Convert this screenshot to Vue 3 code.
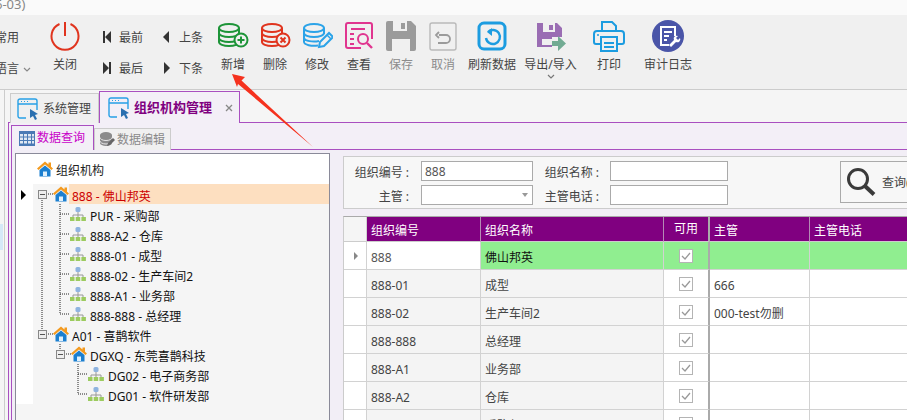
<script setup>
// tree rows: guide = dotted connector path, box = expander box position
const treeRows = [
  { text: '888 - 佛山邦英', kind: 'home', width: 20, guide: 'M13 10H20M9 14V20', box: 5, selected: true },
  { text: 'PUR - 采购部', kind: 'node', width: 37, guide: 'M9 0V20M27 0V20M27 10H37' },
  { text: '888-A2 - 仓库', kind: 'node', width: 37, guide: 'M9 0V20M27 0V20M27 10H37' },
  { text: '888-01 - 成型', kind: 'node', width: 37, guide: 'M9 0V20M27 0V20M27 10H37' },
  { text: '888-02 - 生产车间2', kind: 'node', width: 37, guide: 'M9 0V20M27 0V20M27 10H37' },
  { text: '888-A1 - 业务部', kind: 'node', width: 37, guide: 'M9 0V20M27 0V20M27 10H37' },
  { text: '888-888 - 总经理', kind: 'node', width: 37, guide: 'M9 0V20M27 0V10M27 10H37' },
  { text: 'A01 - 喜鹊软件', kind: 'home', width: 20, guide: 'M9 0V6M13 10H20', box: 5 },
  { text: 'DGXQ - 东莞喜鹊科技', kind: 'home', width: 38, guide: 'M27 0V6M31 10H38', box: 23 },
  { text: 'DG02 - 电子商务部', kind: 'node', width: 55, guide: 'M45 0V20M45 10H55' },
  { text: 'DG01 - 软件研发部', kind: 'node', width: 55, guide: 'M45 0V10M45 10H55' }
]

const gridRows = [
  { code: '888', name: '佛山邦英', manager: '', current: true },
  { code: '888-01', name: '成型', manager: '666' },
  { code: '888-02', name: '生产车间2', manager: '000-test勿删' },
  { code: '888-888', name: '总经理', manager: '' },
  { code: '888-A1', name: '业务部', manager: '' },
  { code: '888-A2', name: '仓库', manager: '' },
  { code: 'PUR', name: '采购部', manager: '' }
]
</script>

<template>
  <div class="app">
    <div class="title-bar"><span>6-03)</span></div>

    <div class="ribbon">
      <div class="quick">
        <span>常用</span>
        <span>语言 <svg class="chev" width="8" height="5" viewBox="0 0 8 5"><path d="M1 1l3 3 3-3" fill="none" stroke="#888" stroke-width="1.2" /></svg></span>
      </div>

      <button class="btn">
        <svg width="32" height="32" viewBox="0 0 32 32" fill="none" stroke="#e0341e" stroke-width="2"><path d="M10.500 4a13.500 13.500 0 1 0 11 0" /><path d="M16 2v14" /></svg>
        <span>关闭</span>
      </button>

      <div class="nav">
        <span class="nav-item"><svg width="10" height="12" viewBox="0 0 10 12"><path d="M1 0h2v12H1zM9 0v12L3 6z" fill="#333" /></svg>最前</span>
        <span class="nav-item"><svg width="10" height="12" viewBox="0 0 10 12"><path d="M7 0v12L1 6z" fill="#333" /></svg>上条</span>
        <span class="nav-item"><svg width="10" height="12" viewBox="0 0 10 12"><path d="M9 0h-2v12h2zM1 0v12l6-6z" fill="#333" /></svg>最后</span>
        <span class="nav-item"><svg width="10" height="12" viewBox="0 0 10 12"><path d="M2 0v12l6-6z" fill="#333" /></svg>下条</span>
      </div>

      <button class="btn">
        <svg width="32" height="32" viewBox="0 0 32 32" fill="none" stroke="#1d9438" stroke-width="2"><path d="M2 8a10 4 0 0 1 20 0a10 4 0 0 1-20 0V22a10 4 0 0 0 20 0V8M2 13a10 4 0 0 0 20 0M2 18a10 4 0 0 0 20 0" /><circle cx="24" cy="20" r="6.5" fill="#f0f0f0" /><path d="M20.5 20h7M24 16.5v7" /></svg>
        <span>新增</span>
      </button>
      <button class="btn">
        <svg width="32" height="32" viewBox="0 0 32 32" fill="none" stroke="#e0341e" stroke-width="2"><path d="M3 8a10 4 0 0 1 20 0a10 4 0 0 1-20 0V22a10 4 0 0 0 20 0V8M3 13a10 4 0 0 0 20 0M3 18a10 4 0 0 0 20 0" /><circle cx="24" cy="20" r="6.5" fill="#f0f0f0" /><path d="M21.5 17.5l5 5M26.5 17.5l-5 5" /></svg>
        <span>删除</span>
      </button>
      <button class="btn">
        <svg width="32" height="32" viewBox="0 0 32 32" fill="none" stroke="#2ba3e8" stroke-width="2"><path d="M3 8a10 4 0 0 1 20 0a10 4 0 0 1-20 0V22a10 4 0 0 0 14 3.5M3 13a10 4 0 0 0 20 0M3 18a10 4 0 0 0 15 3M23 8V14" /><path d="M18 27l1-5 9-9 4 4-9 9z" fill="#f0f0f0" /><path d="M26 15l4 4" stroke-width="1.5" /></svg>
        <span>修改</span>
      </button>
      <button class="btn">
        <svg width="32" height="32" viewBox="0 0 32 32" fill="none" stroke="#e0358f" stroke-width="2"><path d="M18 28H5a2 2 0 0 1-2-2V5a2 2 0 0 1 2-2h22a2 2 0 0 1 2 2v14" /><path d="M8 9h14M7 14h4M7 19h4M7 24h4" /><circle cx="20" cy="19" r="5" /><path d="M24 23l5 5" stroke-width="2.4" /></svg>
        <span>查看</span>
      </button>
      <button class="btn off">
        <svg width="32" height="32" viewBox="0 0 32 32"><path d="M1 3a2 2 0 0 1 2-2h23l5 5v23a2 2 0 0 1-2 2H3a2 2 0 0 1-2-2z" fill="#9b9b9b" /><path d="M8 1h14v10H8z" fill="#f0f0f0" /><path d="M16 3h4v6h-4z" fill="#9b9b9b" /><path d="M7 19h18v12H7z" fill="#f0f0f0" /></svg>
        <span>保存</span>
      </button>
      <button class="btn off">
        <svg width="32" height="32" viewBox="0 0 32 32" fill="none"><rect x="3" y="3" width="26" height="27" rx="2" stroke="#b9b9b9" stroke-width="1.4" /><path d="M12 15h7a4 4 0 0 1 0 8h-8M12 12l-3 3 3 3" stroke="#9b9b9b" stroke-width="1.8" /></svg>
        <span>取消</span>
      </button>
      <button class="btn wide">
        <svg width="32" height="32" viewBox="0 0 32 32" fill="none" stroke="#1c9ce0"><rect x="3" y="3" width="26" height="26" rx="5" stroke-width="3" /><path d="M12 12a7 7 0 1 1-2 6" stroke-width="2.4" /><path d="M16 8l-5 4 5 4z" fill="#1c9ce0" stroke="none" /></svg>
        <span>刷新数据</span>
      </button>
      <button class="btn export">
        <svg width="32" height="32" viewBox="0 0 32 32"><path d="M2 3h20l5 5v9H17v10H2z" fill="#9a6db3" /><path d="M8 3h12v9H8z" fill="#f0f0f0" /><path d="M14 5h4v5h-4z" fill="#9a6db3" /><path d="M7 19h10v6H7z" fill="#f0f0f0" /><path d="M17 21h6v-5l8 7.500-8 7.500v-5h-6z" fill="#72ab93" /></svg>
        <span>导出/导入</span>
        <svg class="chev-down" width="8" height="5" viewBox="0 0 8 5"><path d="M1 1l3 3 3-3" fill="none" stroke="#777" stroke-width="1.2" /></svg>
      </button>
      <button class="btn wide">
        <svg width="32" height="32" viewBox="0 0 32 32" fill="none" stroke="#1c9ce0" stroke-width="2"><path d="M9 12V2h10l4 4v6" /><path d="M8 24H3a2 2 0 0 1-2-2v-8a3 3 0 0 1 3-3h24a3 3 0 0 1 3 3v8a2 2 0 0 1-2 2h-5" /><path d="M8 17h16v14H8z" /><path d="M11 23h10M11 27h10" /><circle cx="5" cy="15" r="1" fill="#1c9ce0" stroke="none" /></svg>
        <span>打印</span>
      </button>
      <button class="btn audit">
        <svg width="32" height="32" viewBox="0 0 32 32" fill="none"><circle cx="16" cy="16" r="16" fill="#4a55a8" /><path d="M17 25H9V7h14v9M12 12h8M12 16h5M12 20h3" stroke="#fff" stroke-width="2" /><path d="M17 25l5-5a3 3 0 0 1 4-4l-2 2 2 2 2-2a3 3 0 0 1-4 4l-5 5z" fill="#fff" /></svg>
        <span>审计日志</span>
      </button>
    </div>

    <div class="body">
      <div class="side"><div class="side-mark"></div></div>

      <div class="main">
        <div class="tabs">
          <div class="tab">
            <svg width="22" height="22" viewBox="0 0 22 22" fill="none"><path d="M9 20H3a2 2 0 0 1-2-2V3a2 2 0 0 1 2-2h15a2 2 0 0 1 2 2v9M1 6h19" stroke="#27a0e6" stroke-width="1.4" /><path d="M4 3.500h1M7 3.500h1M10 3.500h1" stroke="#27a0e6" /><path d="M13 11l8 5-3 1 2 4-2 1-2-4-3 2z" fill="#2a6fb0" /></svg>
            <span>系统管理</span>
          </div>
          <div class="tab active">
            <svg width="22" height="22" viewBox="0 0 22 22" fill="none"><path d="M9 20H3a2 2 0 0 1-2-2V3a2 2 0 0 1 2-2h15a2 2 0 0 1 2 2v9M1 6h19" stroke="#27a0e6" stroke-width="1.4" /><path d="M4 3.500h1M7 3.500h1M10 3.500h1" stroke="#27a0e6" /><path d="M13 11l8 5-3 1 2 4-2 1-2-4-3 2z" fill="#2a6fb0" /></svg>
            <b>组织机构管理</b>
            <svg class="tab-close" width="8" height="8" viewBox="0 0 8 8"><path d="M1 1l6 6M7 1l-6 6" stroke="#888" stroke-width="1.300" /></svg>
          </div>
        </div>

        <div class="panel">
          <div class="sub-tabs">
            <div class="sub-tab active">
              <svg width="16" height="15" viewBox="0 0 16 15"><path d="M0 0h16v15H0z" fill="#4a7ab5" /><path d="M1 3h3v2.500H1zM5 3h3v2.500H5zM9 3h3v2.500H9zM13 3h2v2.500h-2zM1 6.500h3V9H1zM5 6.500h3V9H5zM9 6.500h3V9H9zM13 6.500h2V9h-2zM1 10h3v2.500H1zM5 10h3v2.500H5zM9 10h3v2.500H9zM13 10h2v2.500h-2z" fill="#dfe8f3" /></svg>
              <span>数据查询</span>
            </div>
            <div class="sub-tab">
              <svg width="15" height="15" viewBox="0 0 15 15"><path d="M0 3a6 3 0 0 1 12 0v8a6 3 0 0 1-12 0z" fill="#8b8b8b" /><path d="M0 5.500a6 3 0 0 0 12 0M0 9a6 3 0 0 0 12 0" fill="none" stroke="#e6e6e6" /><path d="M7 14l1-3 5-5 2 2-5 5z" fill="#666" /></svg>
              <span>数据编辑</span>
            </div>
          </div>

          <div class="sub-panel">
            <div class="tree">
              <div class="tree-title">
                <svg class="icon" width="16" height="16" viewBox="0 0 16 16"><path d="M8 .5L0 7.500l1.500 1.500L8 3.500l6.500 5.500L16 7.500l-2-1.800V1.500h-2.500v2z" fill="#f39a1f" /><path d="M2.500 9L8 4.500 13.500 9v6.500h-11z" fill="#1b7fd0" /><path d="M6 10.500h4V15H6z" fill="#dff0fb" /></svg>
                <span>组织机构</span>
              </div>
              <div class="tree-body">
                <div class="gutter">
                  <svg class="marker" width="6" height="10" viewBox="0 0 6 10"><path d="M0 0l5 5-5 5z" fill="#000" /></svg>
                </div>
                <div class="tree-list">
                  <div v-for="row in treeRows" :key="row.text" class="tree-row">
                    <svg class="guide" :width="row.width" height="20">
                      <path :d="row.guide" fill="none" stroke="#222" stroke-dasharray="1 1" />
                      <g v-if="row.box !== undefined">
                        <rect :x="row.box + 0.5" y="6.500" width="8" height="8" fill="#eee" stroke="#888" />
                        <path :d="`M${row.box + 2} 10.500h5`" stroke="#555" />
                      </g>
                    </svg>
                    <svg v-if="row.kind === 'home'" class="icon" width="16" height="16" viewBox="0 0 16 16"><path d="M8 .5L0 7.500l1.500 1.500L8 3.500l6.500 5.500L16 7.500l-2-1.800V1.500h-2.500v2z" fill="#f39a1f" /><path d="M2.500 9L8 4.500 13.500 9v6.500h-11z" fill="#1b7fd0" /><path d="M6 10.500h4V15H6z" fill="#dff0fb" /></svg>
                    <svg v-else class="icon" width="16" height="16" viewBox="0 0 16 16"><rect x="5.500" y="1" width="5" height="5" rx="1.500" fill="#8fb4e0" /><path d="M3 12V9h10v3M8 6v6" fill="none" stroke="#999" /><path d="M0 11h4.500v4H0zM5.700 11h4.500v4H5.700zM11.400 11h4.500v4h-4.500z" fill="#9ccb5f" /></svg>
                    <span class="tree-text" :class="{ selected: row.selected, home: row.kind === 'home' }">{{ row.text }}</span>
                  </div>
                </div>
              </div>
            </div>

            <div class="right">
              <div class="search">
                <div class="form">
                  <label>组织编号 :</label>
                  <input class="field" value="888" readonly />
                  <label>组织名称 :</label>
                  <input class="field" readonly />
                  <label>主管 :</label>
                  <div class="field combo"><i></i></div>
                  <label>主管电话 :</label>
                  <input class="field" readonly />
                </div>
                <button class="query">
                  <svg width="30" height="30" viewBox="0 0 30 30" fill="none" stroke="#3a3a3a"><circle cx="12" cy="12" r="9.500" stroke-width="3" /><path d="M19 19l9 8.500" stroke-width="4" /></svg>
                  <span>查询(F)</span>
                </button>
              </div>

              <div class="grid">
                <div class="grid-row head">
                  <div class="cell ind"></div>
                  <div class="cell">组织编号</div>
                  <div class="cell">组织名称</div>
                  <div class="cell center thick">可用</div>
                  <div class="cell">主管</div>
                  <div class="cell">主管电话</div>
                </div>
                <div v-for="row in gridRows" :key="row.code" class="grid-row" :class="{ current: row.current }">
                  <div class="cell ind">
                    <svg v-if="row.current" width="5" height="8" viewBox="0 0 5 8"><path d="M0 0l4 4-4 4z" fill="#888" /></svg>
                  </div>
                  <div class="cell code">{{ row.code }}</div>
                  <div class="cell name">{{ row.name }}</div>
                  <div class="cell center thick flag">
                    <span class="check">
                      <svg width="10" height="8" viewBox="0 0 10 8"><path d="M1 4l3 3 5-6" fill="none" stroke="#999" stroke-width="1.300" /></svg>
                    </span>
                  </div>
                  <div class="cell">{{ row.manager }}</div>
                  <div class="cell"></div>
                </div>
              </div>
            </div>
          </div>
        </div>
      </div>
    </div>

    <svg class="pointer" width="907" height="420"><path d="M232 74L245 77L241.500 80.500L313 147L238 84L237 87Z" fill="#f5321e" /></svg>
  </div>
</template>

<style scoped>
.app {
  position: relative;
  display: flex;
  flex-direction: column;
  width: 907px;
  height: 420px;
  overflow: hidden;
  background: #fafafa;
  color: #444;
  font-family: "Noto Sans", "Noto Sans CJK SC", sans-serif;
  font-size: 12px;
}

.title-bar {
  flex: 0 0 15px;
  line-height: 9px;
  font-size: 13px;
  color: #888;
  overflow: hidden;
}
.title-bar span {
  margin-left: -5px;
}

/* 工具栏 */
.ribbon {
  display: flex;
  flex: 0 0 75px;
  box-sizing: border-box;
  background: #f0f0f0;
  border-bottom: 1px solid #ccc;
}
.quick {
  display: flex;
  flex-direction: column;
  flex: 0 0 44px;
  padding-top: 14px;
  gap: 13px;
  line-height: 18px;
  overflow: hidden;
  white-space: nowrap;
}
.quick span {
  margin-left: -5px;
}
.chev {
  margin-left: 1px;
  vertical-align: 1px;
}
.btn {
  display: flex;
  flex-direction: column;
  align-items: center;
  flex: 0 0 42px;
  padding: 5px 0 0;
  border: 0;
  background: none;
  color: #444;
  font: inherit;
  white-space: nowrap;
}
.btn span {
  margin-top: 3px;
  height: 18px;
  line-height: 20px;
}
.btn.off {
  color: #8c8c8c;
}
.btn.wide {
  flex-basis: 56px;
}
.btn.export {
  flex-basis: 61px;
}
.btn.audit {
  flex-basis: 62px;
}
.chev-down {
  margin-top: 1px;
}
.nav {
  display: grid;
  grid-template-columns: 60px 50px;
  grid-auto-rows: 20px;
  flex: 0 0 126px;
  row-gap: 11px;
  padding: 12px 0 0 16px;
  box-sizing: border-box;
}
.nav-item {
  display: flex;
  align-items: center;
  gap: 7px;
  white-space: nowrap;
}

/* 主体 */
.body {
  display: flex;
  flex: 1;
  min-height: 0;
  background: #f5f5f5;
}
.side {
  flex: 0 0 4px;
  padding-top: 134px;
  border-right: 1px solid #ccc;
}
.side-mark {
  width: 3px;
  height: 26px;
  background: #d5e9f7;
}
.main {
  display: flex;
  flex-direction: column;
  flex: 1;
  min-width: 0;
  padding-left: 3px;
}
.tabs {
  display: flex;
  align-items: flex-end;
  flex: 0 0 33px;
  margin-left: 2px;
  margin-bottom: -1px;
  position: relative;
  z-index: 1;
}
.tab {
  display: flex;
  align-items: center;
  gap: 4px;
  box-sizing: border-box;
  width: 89px;
  height: 30px;
  padding-left: 6px;
  background: #f0f0f0;
  border: 1px solid #ccc;
  border-bottom: 0;
}
.tab span,
.tab b {
  position: relative;
  top: -1px;
}
.tab.active {
  width: 141px;
  height: 32px;
  padding-left: 8px;
  background: #f3eff7;
  border: 1px solid #a94fc0;
  border-bottom: 0;
}
.tab b {
  color: #800080;
  font-size: 13px;
}
.tab-close {
  margin-left: 9px;
}
.panel {
  display: flex;
  flex-direction: column;
  flex: 1;
  min-height: 0;
  padding: 2px 0 0 2px;
  background: #f3eff7;
  border-left: 1px solid #a94fc0;
  border-top: 1px solid #a94fc0;
}
.sub-tabs {
  display: flex;
  align-items: flex-end;
  flex: 0 0 24px;
  margin-bottom: -1px;
  position: relative;
  z-index: 1;
}
.sub-tab {
  display: flex;
  align-items: center;
  gap: 2px;
  box-sizing: border-box;
  width: 77px;
  height: 22px;
  padding-left: 5px;
  color: #8a8a8a;
  background: #f0f0f0;
  border: 1px solid #ccc;
  border-bottom: 0;
}
.sub-tab span {
  line-height: 22px;
}
.sub-tab.active {
  width: 83px;
  height: 25px;
  padding-left: 7px;
  color: #c800c8;
  background: #f3eff7;
  border: 1px solid #a94fc0;
  border-bottom: 0;
}
.sub-panel {
  display: flex;
  flex: 1;
  min-height: 0;
  padding: 3px 0 0 3px;
  background: #f2eef6;
  border-left: 1px solid #a94fc0;
  border-top: 1px solid #a94fc0;
}

/* 组织树 */
.tree {
  display: flex;
  flex-direction: column;
  flex: 0 0 315px;
  box-sizing: border-box;
  background: #f5f5f5;
  border: 1px solid #8a8a99;
  border-bottom: 0;
  color: #111;
}
.tree-title {
  display: flex;
  align-items: center;
  flex: 0 0 30px;
  padding-left: 21px;
  gap: 3px;
  background: #fff;
  color: #222;
}
.tree-title span {
  padding-top: 2px;
}
.tree-body {
  display: flex;
  flex: 1;
  align-items: flex-start;
}
.gutter {
  flex: 0 0 17px;
  height: 220px;
  background: #fff;
}
.marker {
  display: block;
  margin: 6px 0 0 5px;
}
.tree-list {
  flex: 1;
  min-width: 0;
}
.tree-row {
  display: flex;
  align-items: center;
  height: 20px;
}
.guide {
  flex: none;
}
.icon {
  flex: none;
}
.tree-text {
  flex: 1;
  height: 20px;
  line-height: 26px;
  padding-left: 4px;
  white-space: nowrap;
}
.tree-text.home {
  padding-left: 3px;
}
.tree-text.selected {
  background: #fddfc0;
  color: #cc0000;
}

/* 查询区 */
.right {
  flex: 0 0 600px;
  margin-left: 13px;
  padding-top: 3px;
}
.search {
  display: flex;
  box-sizing: border-box;
  height: 53px;
  padding: 4px 0 0 10px;
  background: #f7f7f7;
  border: 1px solid #ccc;
  overflow: hidden;
}
.form {
  display: grid;
  grid-template-columns: 67px 112px 77px 118px;
  grid-auto-rows: 20px;
  row-gap: 4px;
}
.form label {
  line-height: 23px;
  text-align: right;
  padding-right: 12px;
  white-space: nowrap;
}
.form label:nth-child(4n + 3) {
  padding-right: 11px;
}
.field {
  box-sizing: border-box;
  width: 100%;
  height: 20px;
  padding: 0 3px;
  background: #fff;
  border: 1px solid #aaa;
  border-radius: 0;
  outline: none;
  color: #555;
  font: inherit;
}
.combo {
  position: relative;
}
.combo i {
  position: absolute;
  right: 4px;
  top: 7px;
  border: 3px solid transparent;
  border-top: 4px solid #999;
  border-bottom: 0;
}
.query {
  display: flex;
  align-items: center;
  flex: 0 0 100px;
  gap: 6px;
  box-sizing: border-box;
  height: 42px;
  margin-left: 112px;
  padding: 0 0 0 5px;
  background: #f7f7f7;
  border: 1px solid #aaa;
  color: #444;
  font: inherit;
  white-space: nowrap;
}

/* 表格 */
.grid {
  margin-top: 7px;
  border-left: 1px solid #ccc;
  border-top: 1px solid #aaa;
}
.grid-row {
  display: grid;
  grid-template-columns: 23px 114px 183px 46px 100px 134px;
  height: 28px;
  color: #444;
}
.grid-row.head {
  height: 25px;
  color: #fff;
}
.cell {
  box-sizing: border-box;
  padding: 0 0 0 4px;
  background: #fff;
  border-right: 1px solid #d2d2d2;
  border-bottom: 1px solid #d2d2d2;
  line-height: 31px;
  white-space: nowrap;
  overflow: hidden;
}
.code,
.name {
  background: #f4f4f4;
}
.head .cell {
  background: #800080;
  border-right-color: #b58ab5;
  border-bottom: 1px solid #ccc;
  line-height: 28px;
}
.head .ind,
.cell.ind {
  display: flex;
  align-items: center;
  padding-left: 10px;
  background: #fff;
  border-right-color: #d2d2d2;
}
.head .ind {
  background: #f5f5f5;
}
.center {
  display: flex;
  align-items: center;
  justify-content: center;
  padding: 0;
}
.cell.thick {
  border-right: 2px solid #aaa;
}
.head .cell.thick {
  border-right: 2px solid #aaa;
}
.check {
  display: flex;
  align-items: center;
  justify-content: center;
  box-sizing: border-box;
  width: 14px;
  height: 14px;
  background: #fff;
  border: 1px solid #b4b4b4;
}
.current .cell {
  background: #90ee90;
  color: #111;
}
.current .code {
  background: #fff;
  color: #555;
}
.current .cell.ind {
  background: #fff;
}

.pointer {
  position: absolute;
  left: 0;
  top: 0;
  z-index: 5;
  pointer-events: none;
}
</style>
